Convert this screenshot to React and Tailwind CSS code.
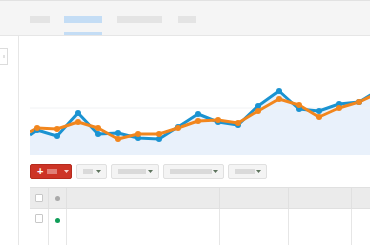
import React from "react";

const xs = [30, 37, 57, 78, 98, 118, 138, 159, 178, 198, 218, 238, 258, 279, 299, 319, 339, 359, 380];
const blue = [135, 130, 136, 113, 134, 133, 138, 139, 127, 114, 122, 125, 106, 91, 109, 111, 104, 102, 89];
const orange = [132, 128, 129, 122, 128, 139, 134, 134, 128, 121, 120, 123, 111, 99, 105, 117, 108, 102, 92];

const pts = (ys) => xs.map((x, i) => `${x},${ys[i]}`).join(" ");

function Chart() {
  return (
    <svg width="340" height="122" viewBox="30 36 340 122" className="block">
      <polygon points={`${pts(blue)} 380,155 30,155`} fill="#e9f1fb" />
      <line x1="30" y1="108" x2="370" y2="108" stroke="#f1f2f4" strokeWidth="1" />
      <polyline points={pts(blue)} fill="none" stroke="#1b93d1" strokeWidth="3" strokeLinejoin="round" />
      <polyline points={pts(orange)} fill="none" stroke="#f2861d" strokeWidth="3" strokeLinejoin="round" />
      {xs.slice(1, -1).map((x, i) => (
        <circle key={"b" + x} cx={x} cy={blue[i + 1]} r="3" fill="#1b93d1" />
      ))}
      {xs.slice(1, -1).map((x, i) => (
        <circle key={"o" + x} cx={x} cy={orange[i + 1]} r="3" fill="#f2861d" />
      ))}
    </svg>
  );
}

function Caret() {
  return (
    <svg width="5" height="3" viewBox="0 0 5 3" className="block">
      <path d="M0 0h5L2.5 3z" fill="#5d735d" />
    </svg>
  );
}

function DropButton({ width, block }) {
  return (
    <div
      className="h-[15px] flex items-center justify-between pl-[6px] pr-[5px] bg-[#f4f4f4] border border-[#e0e0e0] rounded-[2px]"
      style={{ width }}
    >
      <div className="h-[5px] bg-[#dadada]" style={{ width: block }} />
      <Caret />
    </div>
  );
}

export default function App() {
  return (
    <div className="w-[370px] h-[245px] overflow-hidden bg-white flex flex-col font-['Liberation_Sans',sans-serif]">
      {/* top tabs */}
      <div className="h-[36px] shrink-0 bg-[#f5f5f5] border-t border-[#e2e2e2] border-b border-b-[#e6e6e6] flex pl-[30px]">
        <div className="pt-[15px] w-[20px]">
          <div className="h-[7px] bg-[#e4e4e4]" />
        </div>
        <div className="pt-[15px] w-[38px] ml-[14px] border-b-[3px] border-[#c4ddf5] flex flex-col">
          <div className="h-[7px] bg-[#c4ddf5]" />
        </div>
        <div className="pt-[15px] w-[45px] ml-[15px]">
          <div className="h-[7px] bg-[#e4e4e4]" />
        </div>
        <div className="pt-[15px] w-[18px] ml-[16px]">
          <div className="h-[7px] bg-[#e4e4e4]" />
        </div>
      </div>

      <div className="flex flex-1 min-h-0">
        {/* sidebar */}
        <div className="w-[19px] shrink-0 border-r border-[#e6e6e6]">
          <div className="mt-[12px] w-[8px] h-[17px] border border-l-0 border-[#dcdcdc] bg-white flex items-center justify-center">
            <div className="w-[2px] h-[3px] bg-[#e2e2e2]" />
          </div>
        </div>

        {/* main */}
        <div className="flex-1 pl-[11px] flex flex-col">
          <Chart />

          <div className="mt-[6px] flex gap-[4px]">
            <div className="w-[42px] h-[15px] flex items-center pl-[6px] gap-[4px] bg-[#cd3426] border border-[#b52a1d] rounded-[2px]">
              <span className="text-white font-bold text-[11px] leading-none">+</span>
              <div className="w-[10px] h-[5px] bg-[#e07f77]" />
              <div className="ml-[3px]">
                <svg width="5" height="3" viewBox="0 0 5 3" className="block">
                  <path d="M0 0h5L2.5 3z" fill="#f6d0cc" />
                </svg>
              </div>
            </div>
            <DropButton width={31} block={10} />
            <DropButton width={48} block={28} />
            <DropButton width={61} block={42} />
            <DropButton width={39} block={20} />
          </div>

          <div className="mt-[8px] flex-1 grid grid-cols-[19px_18px_153px_69px_63px_1fr] grid-rows-[21px_1fr] border-t border-[#e0e0e0]">
            <div className="bg-[#ebebeb] border-r border-b border-[#e0e0e0] flex items-center justify-center">
              <div className="w-[8px] h-[8px] bg-white border border-[#c8c8c8] rounded-[1px]" />
            </div>
            <div className="bg-[#ebebeb] border-r border-b border-[#e0e0e0] flex items-center justify-center">
              <div className="w-[5px] h-[5px] rounded-full bg-[#a9a9a9]" />
            </div>
            <div className="bg-[#ebebeb] border-r border-b border-[#e0e0e0]" />
            <div className="bg-[#ebebeb] border-r border-b border-[#e0e0e0]" />
            <div className="bg-[#ebebeb] border-r border-b border-[#e0e0e0]" />
            <div className="bg-[#ebebeb] border-b border-[#e0e0e0]" />

            <div className="border-r border-[#e6e6e6] flex justify-center pt-[5px]">
              <div className="w-[8px] h-[9px] bg-white border border-[#c8c8c8] rounded-[1px]" />
            </div>
            <div className="border-r border-[#e6e6e6] flex justify-center pt-[9px]">
              <div className="w-[5px] h-[5px] rounded-full bg-[#0f9d58]" />
            </div>
            <div className="border-r border-[#e6e6e6]" />
            <div className="border-r border-[#e6e6e6]" />
            <div className="border-r border-[#e6e6e6]" />
            <div />
          </div>
        </div>
      </div>
    </div>
  );
}
